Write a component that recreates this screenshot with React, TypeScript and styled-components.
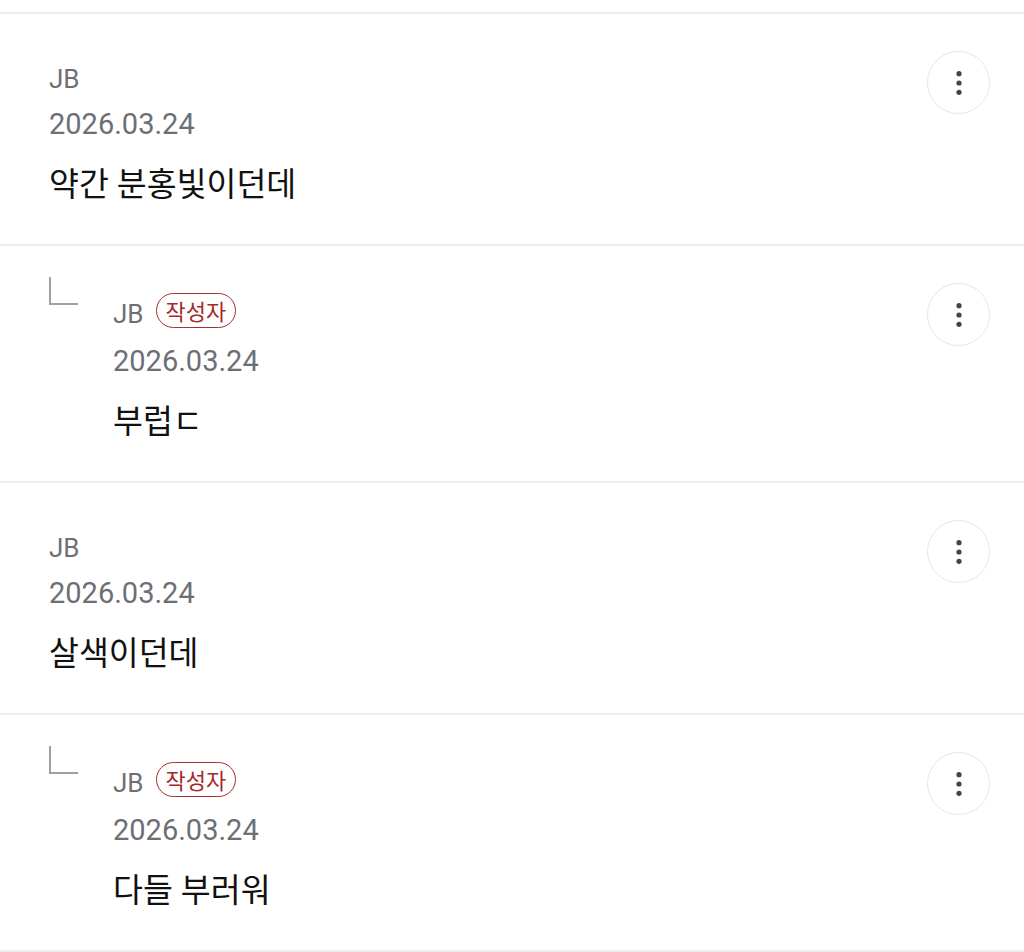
import React from "react";
import styled, { createGlobalStyle } from "styled-components";

const GlobalStyle = createGlobalStyle`
  html, body {
    margin: 0;
    padding: 0;
    background: #ffffff;
  }
  body {
    font-family: Roboto, "Noto Sans CJK KR", sans-serif;
    -webkit-font-smoothing: antialiased;
  }
  * { box-sizing: border-box; }
`;

const List = styled.div`
  margin-top: 12px;
  border-top: 2px solid #eeeeee;
  display: flex;
  flex-direction: column;
`;

const Row = styled.div`
  display: flex;
  align-items: flex-start;
  padding: 37px 34px 37px 49px;
  border-bottom: 2px solid #eeeeee;
`;

const ReplyMark = styled.div`
  flex: 0 0 auto;
  width: 29px;
  height: 28px;
  margin-top: -6px;
  margin-right: 35px;
  border-left: 2px solid #a0a0a0;
  border-bottom: 2px solid #a0a0a0;
`;

const Body = styled.div`
  flex: 1 1 auto;
  display: flex;
  flex-direction: column;
  padding-top: 12px;
`;

const NameLine = styled.div<{ $tall: boolean }>`
  display: flex;
  align-items: center;
  gap: 12px;
  height: ${(p) => (p.$tall ? 37 : 32)}px;
`;

const Name = styled.span`
  font-family: Roboto, "Noto Sans CJK KR", sans-serif;
  font-size: 26px;
  line-height: 32px;
  color: #6c7076;
`;

const AuthorBadge = styled.span`
  display: inline-flex;
  align-items: center;
  height: 35px;
  padding: 0 9px;
  margin-top: -7px;
  border: 1.5px solid #a53030;
  border-radius: 18px;
  font-family: "Noto Sans CJK KR", sans-serif;
  font-size: 22px;
  line-height: 1;
  color: #a52a2a;
`;

const DateText = styled.div`
  margin-top: 9px;
  font-family: Roboto, sans-serif;
  font-size: 29px;
  line-height: 40px;
  color: #6c7076;
`;

const Content = styled.div`
  margin-top: 19px;
  font-family: Roboto, "Noto Sans CJK KR", sans-serif;
  font-size: 32.5px;
  font-weight: 400;
  line-height: 44px;
  color: #111111;
`;

const MenuButton = styled.button`
  flex: 0 0 auto;
  width: 63px;
  height: 63px;
  border-radius: 50%;
  border: 1.5px solid #e6e6e6;
  background: #ffffff;
  padding: 0;
  display: flex;
  align-items: center;
  justify-content: center;
  cursor: pointer;
`;

const Dots = () => (
  <svg width="8" height="26" viewBox="0 0 8 26" aria-hidden="true">
    <circle cx="4" cy="3.7" r="2.6" fill="#444" />
    <circle cx="4" cy="13" r="2.6" fill="#444" />
    <circle cx="4" cy="22.3" r="2.6" fill="#444" />
  </svg>
);

type Comment = {
  name: string;
  date: string;
  text: string;
  reply?: boolean;
  author?: boolean;
};

const comments: Comment[] = [
  { name: "JB", date: "2026.03.24", text: "약간 분홍빛이던데" },
  { name: "JB", date: "2026.03.24", text: "부럽ㄷ", reply: true, author: true },
  { name: "JB", date: "2026.03.24", text: "살색이던데" },
  { name: "JB", date: "2026.03.24", text: "다들 부러워", reply: true, author: true },
];

export default function App() {
  return (
    <>
      <GlobalStyle />
      <List>
        {comments.map((c, i) => (
          <Row key={i}>
            {c.reply && <ReplyMark />}
            <Body>
              <NameLine $tall={!!c.author}>
                <Name>{c.name}</Name>
                {c.author && <AuthorBadge>작성자</AuthorBadge>}
              </NameLine>
              <DateText>{c.date}</DateText>
              <Content>{c.text}</Content>
            </Body>
            <MenuButton aria-label="더보기">
              <Dots />
            </MenuButton>
          </Row>
        ))}
      </List>
    </>
  );
}
